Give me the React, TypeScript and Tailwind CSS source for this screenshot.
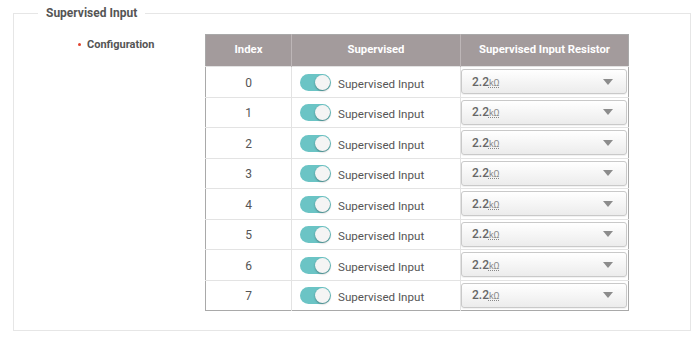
import React from 'react';

const rows = [0, 1, 2, 3, 4, 5, 6, 7];

function Toggle() {
  return (
    <span className="relative inline-block w-[31px] h-[17px] rounded-full bg-[#6bc4c5] shrink-0">
      <span className="absolute right-[1px] top-[1px] w-[15px] h-[15px] rounded-full bg-[#f4f4f4] shadow-[0_1px_2px_rgba(0,0,0,0.35)]" />
    </span>
  );
}

function ResistorSelect() {
  return (
    <div className="flex items-center justify-between h-[25px] w-full rounded-[3px] border border-[#c9c9c9] bg-gradient-to-b from-white to-[#ececec] pl-[10px] pr-[13px] shadow-[0_1px_1px_rgba(0,0,0,0.06)]">
      <span className="text-[12px] font-medium text-[#666]">
        2.2<span className="text-[9px] font-normal text-[#888] underline decoration-dotted">kΩ</span>
      </span>
      <span className="w-0 h-0 border-l-[5px] border-r-[5px] border-t-[6px] border-l-transparent border-r-transparent border-t-[#8c8c8c]" />
    </div>
  );
}

export default function App() {
  return (
    <div className="w-[700px] h-[338px] bg-white font-['Roboto',sans-serif] overflow-hidden">
      <fieldset className="ml-[13px] mt-[5px] w-[678px] border border-[#e6e6e6] pb-[19px] px-0">
        <legend className="ml-[24px] px-[8px] text-[12px] leading-[16px] font-bold text-[#555]">
          Supervised Input
        </legend>

        <div className="flex mt-[13px]">
          {/* label */}
          <div className="w-[191px] shrink-0 flex items-start pl-[64px] pt-[4px]">
            <span className="mt-[5px] mr-[6px] w-[3px] h-[3px] rounded-full bg-[#e2432e]" />
            <span className="text-[11px] leading-[14px] font-bold text-[#555]">Configuration</span>
          </div>

          {/* table */}
          <table className="border-collapse border border-[#a9a9a9] text-[#555]">
            <thead>
              <tr className="bg-[#a39b9c] text-white text-[11.3px] font-bold h-[32px]">
                <th className="w-[86px] border-r border-[#bdb6b7] font-bold">Index</th>
                <th className="w-[169px] border-r border-[#bdb6b7] font-bold">Supervised</th>
                <th className="w-[168px] font-bold">Supervised Input Resistor</th>
              </tr>
            </thead>
            <tbody>
              {rows.map((i) => (
                <tr key={i} className="h-[30.5px] border-t border-[#e3e3e3]">
                  <td className="text-center text-[12px] border-r border-[#e3e3e3] pt-[2px]">{i}</td>
                  <td className="border-r border-[#e3e3e3] pl-[8px] pt-[1px]">
                    <div className="flex items-center gap-[7px]">
                      <Toggle />
                      <span className="text-[11.6px] leading-[17px] relative top-[2px] text-[#555]">Supervised Input</span>
                    </div>
                  </td>
                  <td className="px-0 py-0 pr-[1px]">
                    <ResistorSelect />
                  </td>
                </tr>
              ))}
            </tbody>
          </table>
        </div>
      </fieldset>
    </div>
  );
}
